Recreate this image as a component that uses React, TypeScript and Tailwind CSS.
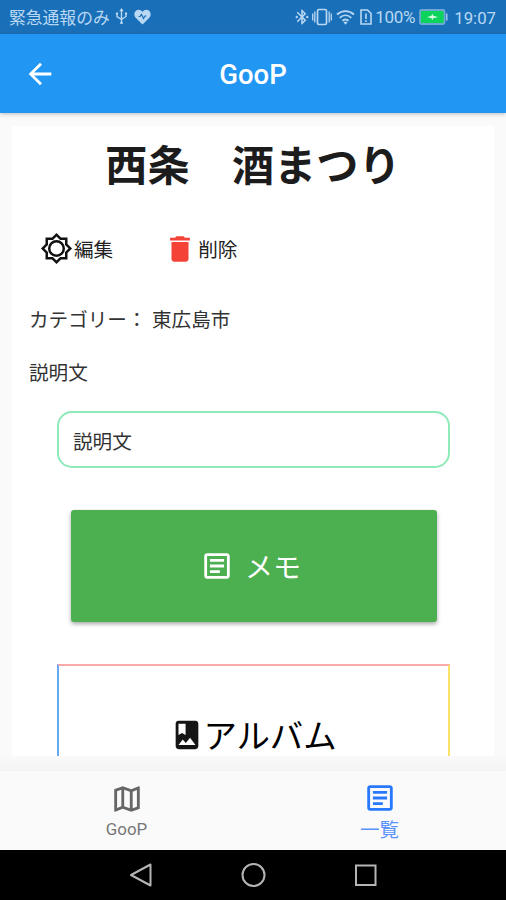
import type { ReactNode } from 'react';
import { MdArrowBack, MdBluetoothConnected, MdDelete, MdOutlineArticle, MdOutlineMap } from 'react-icons/md';

function StatusBar() {
  return (
    <div className="flex h-[34px] shrink-0 items-center justify-between bg-[#1a70b8] pr-[10px] pl-[9px] text-[#b9d8f3]">
      <div className="flex items-center">
        <span className="pt-[2px] text-[16.8px] leading-none">緊急通報のみ</span>
        {/* usb */}
        <svg className="ml-[5px] h-[17px] w-[13px]" viewBox="0 0 13 17" fill="none" stroke="currentColor" strokeWidth="1.4">
          <path d="M6.5 2v12M2 5.5v3.2l4.5 2.8M11 5v3.5l-4.5 3" />
          <path d="M6.5 0L4.3 3.2h4.4zM.9 4.4h2.2v2H.9zM9.9 4.4h2.2v2H9.9zM5.3 14h2.4v2H5.3z" fill="currentColor" stroke="none" />
        </svg>
        <svg className="ml-[6px] h-[16px] w-[17px]" viewBox="0 0 17 16">
          <path d="M8.5 15.5L2 9C-.3 6.6 0 3.5 1.7 1.9 3.7.1 6.8.4 8.5 2.8 10.2.4 13.3.1 15.3 1.9 17 3.5 17.3 6.6 15 9z" fill="currentColor" />
          <path d="M4.5 7.5h1.5l1.5-2 2 4L11 7h1.5" fill="none" stroke="#1a70b8" strokeWidth="1.2" />
        </svg>
      </div>
      <div className="flex items-center">
        <MdBluetoothConnected className="h-[18px] w-[18px]" />
        <svg className="ml-[1px] h-[18px] w-[20px]" viewBox="0 0 20 18" fill="none" stroke="currentColor" strokeWidth="1.7">
          <rect x="5.5" y="1.5" width="9" height="15" rx="1.5" />
          <path d="M2.8 3.5v11M17.2 3.5v11M.7 5.5v7M19.3 5.5v7" strokeWidth="1.3" />
        </svg>
        <svg className="ml-[4px] h-[16px] w-[19px]" viewBox="0 0 19 16" fill="none" stroke="currentColor" strokeWidth="1.8">
          <path d="M1 5.5c5-4.6 12-4.6 17 0M3.7 8.8c3.5-3.2 8.1-3.2 11.6 0M6.4 11.8c1.9-1.6 4.3-1.6 6.2 0" />
          <path d="M7.5 13.2c.7-.6 1.3-.6 2-.1.7-.5 1.3-.5 2 .1l-2 2.6z" fill="currentColor" stroke="none" />
        </svg>
        <svg className="ml-[5px] h-[16px] w-[12px]" viewBox="0 0 12 16" fill="none" stroke="currentColor" strokeWidth="1.6">
          <path d="M1 1h6.5L11 4.5V15H1zM6 4.5V10M6 11.3v1.7" />
        </svg>
        <span className="ml-[3px] w-[39px] pt-px text-[17px] leading-none tracking-[-0.3px] whitespace-nowrap">100%</span>
        <svg className="ml-[5px] h-[16px] w-[29px]" viewBox="0 0 29 16">
          <rect x="1" y="1" width="24.5" height="14" rx="1.5" fill="#0bd35c" stroke="#6ea9d5" strokeWidth="1.8" />
          <path d="M27 4.5h1.5v7H27z" fill="#9cc8ea" />
          <path d="M8 8l4.5-1.3.8-2 1 2L19 8l-4.7 1.2-1 2-.8-2z" fill="#d8ffe6" />
        </svg>
        <span className="ml-[6px] pt-[2px] text-[16.8px] leading-none">19:07</span>
      </div>
    </div>
  );
}

function AppBar() {
  return (
    <header className="z-10 grid h-[79px] shrink-0 grid-cols-[80px_1fr_80px] items-center bg-[#2196f3] text-white shadow-[0_1px_4px_rgba(0,0,0,0.25)]">
      <MdArrowBack className="ml-[23px] size-[34px]" />
      <h1 className="pt-[3px] text-center text-[27.5px] leading-none font-medium">GooP</h1>
    </header>
  );
}

function SunIcon() {
  return (
    <svg className="size-[33px] -translate-y-px" viewBox="0 0 24 24" fill="#111">
      <path d="M20 8.69V4h-4.69L12 .69 8.69 4H4v4.69L.69 12 4 15.31V20h4.69L12 23.31 15.31 20H20v-4.69L23.31 12 20 8.69zm-1.8 5.87V18.2h-3.64L12 20.76 9.44 18.2H5.8v-3.64L3.24 12 5.8 9.44V5.8h3.64L12 3.24l2.56 2.56h3.64v3.64L20.76 12z" />
      <circle cx="12" cy="12" r="5.3" fill="none" stroke="#111" strokeWidth="1.8" />
    </svg>
  );
}

function AlbumIcon() {
  return (
    <svg className="size-[34px]" viewBox="0 0 24 24" fill="#151515">
      <path d="M18 2H6c-1.1 0-2 .9-2 2v16c0 1.1.9 2 2 2h12c1.1 0 2-.9 2-2V4c0-1.1-.9-2-2-2zM6 4h5v8l-2.5-1.5L6 12V4zm0 15l3-3.86 2.14 2.58 3-3.86L18 19H6z" />
    </svg>
  );
}

function NavItem({ icon, label, className }: { icon: ReactNode; label: string; className: string }) {
  return (
    <div className={`flex flex-1 flex-col items-center ${className}`}>
      {icon}
      {label}
    </div>
  );
}

export default function App() {
  return (
    <div className="flex h-[900px] w-[506px] flex-col overflow-hidden bg-[#fafafa] font-[Roboto,'Noto_Sans_CJK_JP',sans-serif] text-[#222]">
      <StatusBar />
      <AppBar />

      <main className="mx-3 mt-[13px] h-[630px] shrink-0 overflow-hidden bg-white">
        <h2 className="pt-[12px] text-center text-[42.2px] leading-[58px] font-bold text-[#1c1c1c]">西条　酒まつり</h2>

        <div className="mt-[36px] flex h-[34px] items-center pl-[28px] text-[19.6px] leading-none">
          <SunIcon />
          <span className="pt-[3px] pl-[1px]">編集</span>
          <MdDelete className="ml-[50px] size-[34px] text-[#f44336]" />
          <span className="pt-[3px] pl-px">削除</span>
        </div>

        <div className="mt-[41px] flex pl-[17px] text-[19.6px] leading-[28px] text-[#333]">
          <span className="w-[123px]">カテゴリー：</span>
          <span>東広島市</span>
        </div>
        <div className="mt-[25px] pl-[17px] text-[19.6px] leading-[28px] text-[#333]">説明文</div>

        <div className="mt-[23px] mr-[44px] ml-[45px] flex h-[57px] items-center rounded-[15px] border-2 border-[#8feab9] pl-[14px] text-[19.6px] leading-none text-[#333]">
          <span className="pt-[6px]">説明文</span>
        </div>

        <button className="mt-[42px] ml-[59px] flex h-[112px] w-[366px] items-center justify-center rounded-[3px] bg-[#4caf50] pr-[7px] text-[28px] leading-none text-white shadow-[0_2px_4px_rgba(0,0,0,0.35)]">
          <MdOutlineArticle className="mr-[11px] size-[34px]" />
          <span className="pt-[6px]">メモ</span>
        </button>

        <div className="mt-[42px] mr-[44px] ml-[45px] flex h-[92px] justify-center overflow-hidden border-2 border-b-0 border-t-[#f9a9a9] border-r-[#fde26a] border-l-[#64a9ec] pt-[47px] text-[33.4px] leading-[45px] text-black">
          <div className="mt-[5px] mr-[-1px]">
            <AlbumIcon />
          </div>
          <span className="translate-y-px">アルバム</span>
        </div>
      </main>

      <div className="h-[15px] shrink-0 bg-linear-to-b from-[#fafafa] to-[#f3f3f3]" />
      <nav className="flex h-[79px] shrink-0 bg-[#fafafa] pt-[10px]">
        <NavItem
          icon={<MdOutlineMap className="mt-[1px] mb-[2px] size-[34px] text-[#666]" />}
          label="GooP"
          className="text-[16.9px] leading-[22px] text-[#777]"
        />
        <NavItem
          icon={<MdOutlineArticle className="mb-[4px] size-[34px] text-[#2979ff]" />}
          label="一覧"
          className="text-[19.5px] leading-[24px] text-[#5a93fb]"
        />
      </nav>

      {/* android navigation keys */}
      <div className="flex h-[50px] shrink-0 items-center justify-center gap-[88px] bg-black">
        <svg className="h-[26px] w-[24px]" viewBox="0 0 24 26" fill="none" stroke="#b5b5b5" strokeWidth="2">
          <path d="M22.5 2.5v21L3 13z" strokeLinejoin="round" />
        </svg>
        <svg className="size-[26px]" viewBox="0 0 26 26" fill="none" stroke="#b5b5b5" strokeWidth="2">
          <circle cx="13.5" cy="13" r="11" />
        </svg>
        <svg className="h-[26px] w-[24px]" viewBox="0 0 24 26" fill="none" stroke="#b5b5b5" strokeWidth="2">
          <rect x="2" y="3.5" width="19.5" height="19.5" />
        </svg>
      </div>
    </div>
  );
}
